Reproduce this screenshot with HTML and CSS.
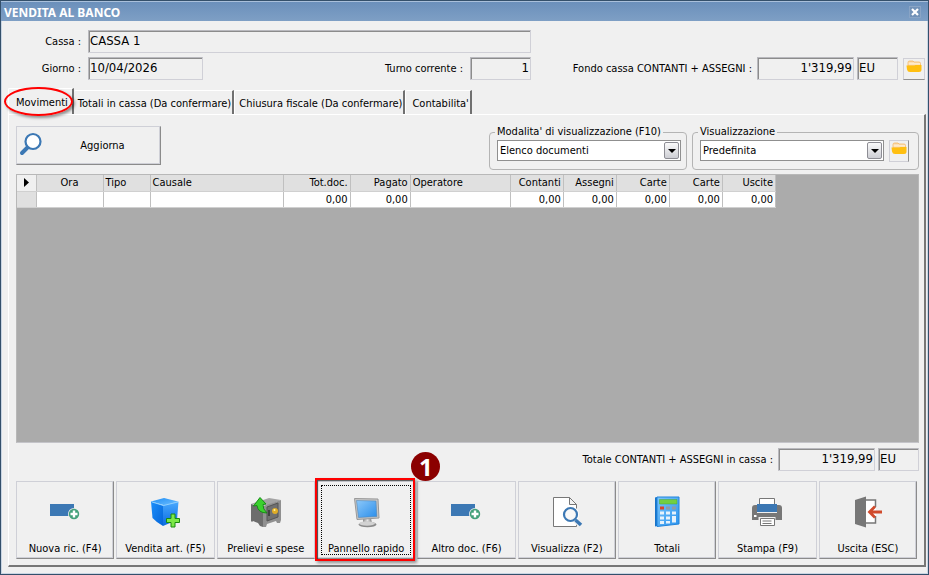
FILE: index.html
```html
<!DOCTYPE html>
<html lang="it">
<head>
<meta charset="utf-8">
<meta name="viewport" content="width=device-width, initial-scale=1">
<title>Vendita al banco</title>
<link rel="stylesheet" href="styles.css">
</head>
<body>
<svg class="defs" aria-hidden="true">
  <defs>
    <linearGradient id="gold" x1="0" y1="0" x2="0" y2="1"><stop offset="0" stop-color="#f9cf94"/><stop offset=".5" stop-color="#ffefd6"/><stop offset="1" stop-color="#f2a84a"/></linearGradient>
    <linearGradient id="blueTop" x1="0" y1="0" x2="1" y2="1"><stop offset="0" stop-color="#1f8df5"/><stop offset="1" stop-color="#6fc0ff"/></linearGradient>
    <linearGradient id="blueLeft" x1="0" y1="0" x2="1" y2="1"><stop offset="0" stop-color="#1c8ffb"/><stop offset="1" stop-color="#0464d8"/></linearGradient>
    <linearGradient id="blueRight" x1="0" y1="0" x2="0" y2="1"><stop offset="0" stop-color="#49a9ff"/><stop offset="1" stop-color="#0a6be0"/></linearGradient>
    <linearGradient id="screen" x1="0" y1="0" x2="1" y2="1"><stop offset="0" stop-color="#8cc8fa"/><stop offset="1" stop-color="#2b8eea"/></linearGradient>
    <linearGradient id="metal" x1="0" y1="0" x2="1" y2="0"><stop offset="0" stop-color="#8d8d8d"/><stop offset=".5" stop-color="#e4e4e4"/><stop offset="1" stop-color="#777"/></linearGradient>
    <linearGradient id="calc" x1="0" y1="0" x2="1" y2="1"><stop offset="0" stop-color="#7cc6fb"/><stop offset="1" stop-color="#2a93ee"/></linearGradient>
    <symbol id="folder" viewBox="0 0 16 14">
      <path d="M2 2.500Q2 1 3.500 1H7l1 1h5q1.500 0 1.500 1.500V7H2z" fill="url(#gold)" stroke="#f4b764" stroke-width=".800"/>
      <path d="M.500 5.500h8l1-.500h6v4.500q0 2.500-2.500 2.500H4Q1.500 12 1 9.500z" fill="#ffbf10"/>
    </symbol>
    <symbol id="card" viewBox="0 0 32 32">
      <path d="M1 8h24v12H1z" fill="#3c78b4"/>
      <circle cx="25" cy="18" r="6" fill="#efefef"/>
      <circle cx="25" cy="18" r="4.500" fill="#43a07a" stroke="#43a07a" stroke-width="1.400"/>
      <path d="M25 14.500v7M21.500 18h7" stroke="#fff" stroke-width="2.400"/>
    </symbol>
  </defs>
</svg>
<div class="window">
  <header class="titlebar">
    <h1>VENDITA AL BANCO</h1>
    <button class="close" type="button" aria-label="Chiudi"><svg viewBox="0 0 8 8"><path d="M1 1l6 6M7 1L1 7" stroke="#fff" stroke-width="2.200"/></svg></button>
  </header>
  <form class="head">
    <div class="left">
      <label class="key" for="cassa">Cassa :</label>
      <input id="cassa" class="field wide" value="CASSA 1" readonly>
      <label class="key" for="giorno">Giorno :</label>
      <input id="giorno" class="field" value="10/04/2026" readonly>
      <label class="turn" for="turno">Turno corrente :</label>
      <input id="turno" class="field num" value="1" readonly>
    </div>
    <div class="fund">
      <label for="fondo">Fondo cassa CONTANTI + ASSEGNI :</label>
      <input id="fondo" class="field num amount" value="1'319,99" readonly>
      <input class="field currency" value="EU" aria-label="Valuta" readonly>
      <button class="folder" type="button" aria-label="Apri"><svg><use href="#folder"/></svg></button>
    </div>
  </form>
  <nav class="tabs" role="tablist">
    <button class="tab active" role="tab" aria-selected="true">Movimenti</button>
    <button class="tab" role="tab">Totali in cassa (Da confermare)</button>
    <button class="tab" role="tab">Chiusura fiscale (Da confermare)</button>
    <button class="tab" role="tab">Contabilita'</button>
  </nav>
  <main class="panel">
    <div class="tools">
      <button class="refresh bevel edge" type="button">
        <svg viewBox="0 0 24 24"><path d="M9.500 14.500L3 21" stroke="#3c78b4" stroke-width="4" stroke-linecap="round"/><circle cx="14" cy="9.500" r="7.500" fill="#fff" stroke="#3c78b4" stroke-width="2.200"/></svg>
        <span>Aggiorna</span>
      </button>
      <fieldset class="mode">
        <legend>Modalita' di visualizzazione (F10)</legend>
        <div class="combo"><select aria-label="Modalita' di visualizzazione"><option>Elenco documenti</option></select><i></i></div>
      </fieldset>
      <fieldset class="view">
        <legend>Visualizzazione</legend>
        <div class="combo"><select aria-label="Visualizzazione"><option>Predefinita</option></select><i></i></div>
        <button class="folder" type="button" aria-label="Apri"><svg><use href="#folder"/></svg></button>
      </fieldset>
    </div>
    <div class="grid">
      <table>
        <colgroup><col class="c-mark"><col class="c-m"><col class="c-tipo"><col class="c-causale"><col class="c-m"><col class="c-pag"><col class="c-op"><col class="c-s"><col class="c-s"><col class="c-s"><col class="c-s"><col class="c-s"></colgroup>
        <thead>
          <tr><th class="mark" aria-label="Riga"><svg viewBox="0 0 5 9"><path d="M0 0l5 4.500L0 9z"/></svg></th><th class="mid">Ora</th><th>Tipo</th><th>Causale</th><th class="r">Tot.doc.</th><th class="r">Pagato</th><th>Operatore</th><th class="r">Contanti</th><th class="r">Assegni</th><th class="r">Carte</th><th class="r">Carte</th><th class="r">Uscite</th></tr>
        </thead>
        <tbody>
          <tr><td class="rowhead"></td><td></td><td></td><td></td><td class="r">0,00</td><td class="r">0,00</td><td></td><td class="r">0,00</td><td class="r">0,00</td><td class="r">0,00</td><td class="r">0,00</td><td class="r">0,00</td></tr>
        </tbody>
      </table>
    </div>
    <div class="total">
      <label for="totale">Totale CONTANTI + ASSEGNI in cassa :</label>
      <input id="totale" class="field num amount" value="1'319,99" readonly>
      <input class="field currency" value="EU" aria-label="Valuta totale" readonly>
    </div>
    <div class="actions">
      <button class="action bevel edge" type="button"><svg><use href="#card"/></svg><span>Nuova ric. (F4)</span></button>
      <button class="action bevel" type="button">
        <svg viewBox="0 0 32 32">
          <path d="M2 5.500L15 2l14 3.500L16 9.500z" fill="url(#blueTop)"/>
          <path d="M2 5.500L14 9.500V30Q7 26 3.500 22z" fill="url(#blueLeft)"/>
          <path d="M14 9.500L29.500 5.500 28 24 14 30z" fill="url(#blueRight)"/>
          <path d="M3 6l11.500 3.500L29 6" fill="none" stroke="#8fd0ff"/>
          <path d="M22 18h4v4.500h4.500v4H26V31h-4v-4.500h-4.500v-4H22z" fill="#7ce847" stroke="#188a10"/>
        </svg><span>Vendita art. (F5)</span></button>
      <button class="action bevel" type="button">
        <svg viewBox="0 0 32 32">
          <path d="M1 8L19 2l12 2-13 5z" fill="#a4a4a4"/>
          <path d="M1 8l12 3v20l-3-1-2-3-5-2-1 1-1-1z" fill="#6d6d6d"/>
          <path d="M13 10l18-6v20l-1 3h-3l-1-2-9 3-1 3h-3z" fill="#909090"/>
          <path d="M17 11l11-4v14l-11 4z" fill="#707070" stroke="#555"/>
          <path d="M19 14v6" stroke="#333" stroke-width="1.500"/>
          <circle cx="25" cy="15" r="3" fill="#e0ad26"/><circle cx="24.500" cy="14" r="1" fill="#fff3a0"/>
          <path d="M10 1.500L16 8l-3 .500Q12.500 13 17 17 8 17 7 9.500l-3.500.500z" fill="#3bd12e" stroke="#178c16"/>
        </svg><span>Prelievi e spese</span></button>
      <button class="action bevel current" type="button">
        <svg viewBox="0 0 32 32">
          <path d="M13 22h8l1 6H13z" fill="url(#metal)"/>
          <ellipse cx="17.500" cy="28.500" rx="9" ry="2.800" fill="#8a8a8a"/><ellipse cx="17" cy="27.500" rx="8" ry="2.200" fill="#d2d2d2"/>
          <path d="M4.500 2.500L28 3l1 19-22 1.500z" fill="#c6c6c6" stroke="#999"/>
          <path d="M6.500 4.500L26 5l.800 15.500L8.500 21.500z" fill="url(#screen)" stroke="#4c7eac" stroke-width=".500"/>
        </svg><span>Pannello rapido</span><b class="badge">1</b></button>
      <button class="action bevel" type="button"><svg><use href="#card"/></svg><span>Altro doc. (F6)</span></button>
      <button class="action bevel edge" type="button">
        <svg viewBox="0 0 32 32">
          <path d="M2.500 1.500h16l7 7v22h-23z" fill="#fff" stroke="#777"/>
          <path d="M18.500 1.500v7h7z" fill="#f4f4f4" stroke="#777"/>
          <path d="M24.500 24l6 5.500" stroke="#efefef" stroke-width="6"/>
          <circle cx="19.500" cy="18.500" r="8.500" fill="#fff"/>
          <path d="M24.500 24l5.500 5" stroke="#3c78b4" stroke-width="3.500"/>
          <circle cx="19.500" cy="18.500" r="6.500" fill="#f8f8f8" stroke="#3c78b4" stroke-width="2.200"/>
        </svg><span>Visualizza (F2)</span></button>
      <button class="action bevel edge" type="button">
        <svg viewBox="0 0 32 32">
          <path d="M4 1.500l2-.500v29l-2 .500z" fill="#1773c8"/>
          <path d="M6 1h22v27L6 30.500z" fill="url(#calc)" stroke="#2184dc"/>
          <path d="M8.500 3.500H26v4.500H8.500z" fill="#72cf42" stroke="#4aa63c" stroke-width=".500"/>
          <path d="M9 10.500h4v3H9z" fill="#d9442c"/>
          <path d="M15 10.500h4v3h-4zM21 10.500h4v3h-4z" fill="#8e9aa8"/>
          <path d="M9 15.500h4v3H9zM15 15.500h4v3h-4zM21 15.500h4v3h-4zM9 20.500h4v3H9zM15 20.500h4v3h-4zM21 20h4v6.500h-4zM9 25h4v3H9zM15 25h4v2.500h-4z" fill="#e7f2fb"/>
        </svg><span>Totali</span></button>
      <button class="action bevel" type="button">
        <svg viewBox="0 0 32 32">
          <path d="M8.500 2.500h15v7h-15z" fill="#fff" stroke="#777"/>
          <path d="M1 12q0-3 3-3h24q3 0 3 3v12H1z" fill="#777"/>
          <path d="M6 8h20v8.500H6z" fill="#3c78b4"/><path d="M6 16.500h20" stroke="#efefef"/>
          <path d="M3 19h2.500v2H3z" fill="#fff"/>
          <path d="M7.500 21h17v10h-17z" fill="#efefef"/>
          <path d="M9.500 22.500h14v7h-14z" fill="#fff" stroke="#777"/><path d="M11.500 25h9M11.500 27.500h9" stroke="#777"/>
        </svg><span>Stampa (F9)</span></button>
      <button class="action bevel edge" type="button">
        <svg viewBox="0 0 32 32">
          <path d="M13 4h11v23H13z" fill="#fff"/>
          <path d="M14 4h9.500v7M14 27h9.500v-7" fill="none" stroke="#777" stroke-width="1.500"/>
          <path d="M3 4l11-3.500v31L3 28z" fill="#777"/>
          <path d="M30 16H17.500M23 10.500L17.500 16l5.500 5.500" fill="none" stroke="#d04a2c" stroke-width="2.800"/>
        </svg><span>Uscita (ESC)</span></button>
    </div>
  </main>
</div>
</body>
</html>
```

FILE: styles.css
```css
* { box-sizing: border-box; }
body {
  margin: 0;
  font: 11px/14px "DejaVu Sans Condensed", "Noto Sans", sans-serif;
  color: #000;
}
button, input, select { font: inherit; color: inherit; margin: 0; }
button { background: #f0f0f0; border: 0; padding: 0; }
.defs { position: absolute; width: 0; height: 0; }

.window {
  display: flex;
  flex-direction: column;
  min-height: 100vh;
  background: #f0f0f0;
  border: 1px solid #34506b;
  box-shadow: inset 1px 0 #c9d5e3, inset -1px -1px #c9d5e3;
}
.titlebar {
  display: flex;
  align-items: center;
  justify-content: space-between;
  height: 20px;
  padding: 3px 7px 0 3px;
  border-top: 1px solid #a9c0db;
  background: linear-gradient(#6b90bb, #7e9fc5);
}
.titlebar h1 {
  margin: 0;
  font: bold 12px/16px "Noto Sans", sans-serif;
  color: #fff;
}
.close {
  display: flex;
  width: 12px;
  height: 12px;
  margin-bottom: 3px;
  padding: 1px;
  background: #7292b8;
  border: 1px solid #89a4c5;
}
.close svg { width: 8px; height: 8px; flex: none; }

.head {
  display: flex;
  justify-content: space-between;
  align-items: flex-end;
  padding: 9px 3px 8px 7px;
}
.left {
  display: grid;
  grid-template-columns: 73px 115px 1fr 61px;
  gap: 4px 7px;
  width: 523px;
  align-items: center;
}
.key, .turn { text-align: right; }
.wide { grid-column: 2 / -1; }
.fund, .total { display: flex; align-items: center; gap: 3px; }
.fund label, .total label { margin-right: 2px; }
.field {
  width: 100%;
  min-width: 0;
  height: 23px;
  padding: 0 1px 2px;
  font-size: 13px;
  background: #f0f0f0;
  border: 1px solid #d0d0d7;
  border-top-color: #b9b9be;
  border-left-color: #b9b9be;
  border-radius: 0;
  box-shadow: inset 1px 1px #8c8c8c;
}
.num { text-align: right; }
.amount { width: 97px; }
.currency { width: 41px; }
.folder {
  display: grid;
  place-items: center;
  flex: none;
  width: 22px;
  height: 22px;
  padding-bottom: 4px;
  border: 1px solid #d0d0d7;
  border-bottom-color: #909090;
}
.folder svg { width: 16px; height: 14px; }
.fund .folder { margin-left: 2px; }

.tabs { display: flex; align-items: flex-end; padding-left: 7px; }
.tab {
  height: 24px;
  padding: 2px 1px 0 4px;
  border-top: 1px solid #fff;
  border-left: 1px solid #fff;
  border-right: 2px solid #707070;
  border-radius: 2px 0 0 0;
}
.tab.active {
  position: relative;
  height: 26px;
  padding: 2px 4px 0 7px;
}
.tab.active + .tab { border-left: 0; }
.tab:last-child { padding-left: 6px; }
.tab.active::after {
  content: "";
  position: absolute;
  z-index: 1;
  inset: -2px -1px -2px -5px;
  border: 2px solid #f00;
  border-radius: 50%;
  box-shadow: 2px 2px 3px #0006;
}

.panel {
  flex: 1;
  display: flex;
  flex-direction: column;
  margin: 0 2px 7px 7px;
  padding: 10px 5px 6px 7px;
  border: 1px solid #fff;
  border-right: 2px solid #777;
  border-bottom: 2px solid #777;
}
.tools { display: flex; align-items: flex-start; gap: 5px; height: 49px; }
.bevel {
  border: 1px solid #cfd0d7;
  border-bottom-color: #8b8b8b;
  box-shadow: inset 0 -1px #cfd0d7;
}
.edge { border-right-color: #8b8b8b; box-shadow: inset -1px -1px #cfd0d7; }
.refresh {
  display: flex;
  align-items: center;
  width: 145px;
  height: 39px;
  margin: 1px auto 0 0;
  padding: 0 2px;
}
.refresh svg { width: 24px; height: 24px; margin-bottom: 4px; }
.refresh span { flex: 1; padding-left: 4px; text-align: center; }
fieldset {
  display: flex;
  gap: 6px;
  height: 45px;
  margin: 0;
  padding: 1px 5px 0 7px;
  border: 1px solid #b4b4b4;
  border-radius: 4px;
}
legend { padding: 0 2px; margin-left: -2px; }
.mode { width: 197px; }
.view { width: 227px; }
.combo { position: relative; width: 184px; height: 21px; }
.combo select {
  appearance: none;
  width: 100%;
  height: 21px;
  padding: 0 20px 0 2px;
  background: #fff;
  border: 1px solid #8f8f8f;
  border-radius: 0;
}
.combo i {
  position: absolute;
  top: 2px;
  right: 2px;
  display: grid;
  place-items: center;
  width: 15px;
  height: 17px;
  border: 1px solid #8d8d94;
  border-radius: 2px;
  background: linear-gradient(#fafafa, #cdced4);
  pointer-events: none;
}
.combo i::after {
  content: "";
  border: 4px solid transparent;
  border-top-color: #000;
  border-bottom: 0;
}
.view .folder { width: 20px; margin-left: -1px; border-right-color: #909090; border-bottom-color: #d0d0d7; }

.grid {
  flex: 1;
  background: #ababab;
  border: 1px solid #b8b8b8;
  border-bottom-color: #c4c4c9;
}
table { width: 759px; table-layout: fixed; border-collapse: collapse; }
.c-mark { width: 19px; }
.c-m { width: 67px; }
.c-tipo { width: 47px; }
.c-causale { width: 133px; }
.c-pag { width: 60px; }
.c-op { width: 100px; }
.c-s { width: 53px; }
th, td {
  height: 16px;
  padding: 0 2px;
  line-height: 15px;
  font-weight: normal;
  text-align: left;
  border-right: 1px solid #c0c0c0;
  border-bottom: 1px solid #d0d0d0;
  white-space: nowrap;
}
th { background: #e0e0e0; }
td { background: #fff; }
.rowhead { background: #e0e0e0; }
th.mid, th.mark { text-align: center; }
th.mark { background: #f0f0f0; }
.mark svg { display: block; width: 5px; height: 9px; margin: 0 auto; }
th.r, td.r { text-align: right; }

.total { justify-content: flex-end; padding: 5px 0 10px; }
.actions {
  display: grid;
  grid-template-columns: repeat(9, minmax(0, 1fr));
  gap: 2px;
  padding: 0 2px 0 0;
}
.action {
  display: flex;
  flex-direction: column;
  align-items: center;
  gap: 14px;
  height: 78px;
  padding-top: 14px;
  white-space: nowrap;
}
.action svg { flex: none; width: 32px; height: 32px; }
.current {
  position: relative;
  outline: 1px dotted #000;
  outline-offset: -5px;
}
.current::after {
  content: "";
  position: absolute;
  inset: -4px -1px -3px -3px;
  border: 2px solid #f00;
  box-shadow: 2px 2px 3px #0006, inset 1px 1px 1px #000a;
}
.badge {
  position: absolute;
  z-index: 1;
  top: -30px;
  right: -26px;
  width: 29px;
  height: 29px;
  border-radius: 50%;
  background: #8b0000;
  color: #fff;
  font: bold 24px/29px "Open Sans", sans-serif;
  text-align: center;
}
```
